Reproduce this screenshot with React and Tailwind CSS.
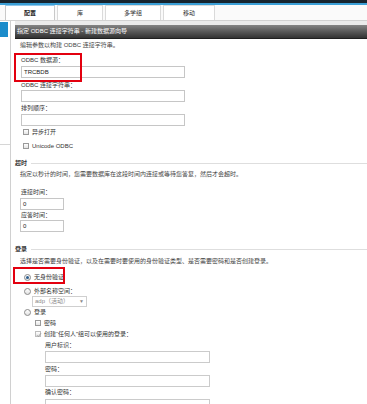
const Line = ({ className = '', children }) => (
    <div className={`h-[10px] leading-[10px] whitespace-nowrap ${className}`}>{children}</div>
);

const Field = ({ className = '', children }) => (
    <div className={`h-[12px] border border-[#c6c6c6] bg-white leading-[10px] pl-[2px] text-[#222] ${className}`}>{children}</div>
);

const Box = ({ checked, disabled }) => (
    <span className={`relative inline-block w-[6px] h-[6px] border ${disabled ? 'border-[#bdbdbd]' : 'border-[#9a9a9a]'} bg-linear-to-b from-white to-[#e4e4e4] mr-[3px] shrink-0`}>
        {checked && (
            <svg viewBox="0 0 6 6" className="absolute inset-0 w-[6px] h-[6px]">
                <path d="M1 3.2 L2.4 4.6 L5 1.2" fill="none" stroke={disabled ? '#9c9c9c' : '#333'} strokeWidth="0.9" />
            </svg>
        )}
    </span>
);

const Radio = ({ checked }) => (
    <span className="inline-flex items-center justify-center w-[7px] h-[7px] rounded-full border border-[#8a8a8a] bg-linear-to-b from-white to-[#e2e2e2] mr-[3px] shrink-0">
        {checked && <span className="w-[3px] h-[3px] rounded-full bg-[#2d5e8e]" />}
    </span>
);

const Heading = ({ className = '', children }) => (
    <div className={`flex items-center h-[10px] leading-[10px] ${className}`}>
        <span className="font-bold text-[#333]">{children}</span>
        <span className="flex-1 h-px bg-[#dedede] ml-[4px]" />
    </div>
);

const tabs = [
    { name: '配置', w: 'w-[50px]', active: true },
    { name: '库', w: 'w-[46px]' },
    { name: '多学组', w: 'w-[56px]' },
    { name: '移动', w: 'w-[52px]' },
];

export default function App() {
    return (
        <div className="relative w-[367px] h-[404px] overflow-hidden bg-white text-[6px] text-[#333] font-['Liberation_Sans','Noto_Sans_CJK_SC',sans-serif]">
            <div className="h-[3px] bg-[#17242e]" />
            <div className="h-[2px] bg-[#3b9fd6]" />
            <div className="flex items-end gap-[2px] h-[16px] pl-[5px] border-b border-[#d2d2d2] bg-[#fafafa]">
                {tabs.map((t) => (
                    <div
                        key={t.name}
                        className={`${t.w} h-[15px] flex items-center justify-center border border-b-0 ${t.active ? 'border-[#c9c9c9] border-t-[#8fc5e8] bg-white font-bold text-[#222]' : 'border-[#dadada] bg-white text-[#333]'}`}
                    >
                        {t.name}
                    </div>
                ))}
            </div>

            <div className="flex">
                <aside className="w-[11px] h-[400px] shrink-0 border-r border-[#d0d0d0]">
                    <div className="h-[124px] pt-[1px] border-b border-[#d6d6d6]">
                        <div className="w-[8px] h-[15px] bg-[#1b8ccb]" />
                    </div>
                </aside>

                <main className="flex-1 pl-[4px]">
                    <div className="h-[4px] bg-[#ebebeb]" />
                    <div className="h-[14px] flex items-center pl-[2px] bg-linear-to-b from-[#858585] via-[#595959] to-[#333] border-b border-[#1f1f1f] text-white">
                        指定 ODBC 连接字符串 - 新建数据源向导
                    </div>
                    <Line className="mt-[1px] pl-[5px] text-[#444]">编辑参数以构建 ODBC 连接字符串。</Line>

                    <Line className="mt-[5px] pl-[6px]">ODBC 数据源：</Line>
                    <Field className="mt-[1px] ml-[6px] w-[164px]">TRCBDB</Field>
                    <Line className="mt-[2px] pl-[6px]">ODBC 连接字符串：</Line>
                    <Field className="ml-[6px] w-[164px]" />
                    <Line className="mt-[1px] pl-[6px]">排列顺序：</Line>
                    <Field className="mt-[1px] ml-[6px] w-[164px]" />
                    <Line className="mt-[1px] pl-[8px] flex items-center"><Box />异步打开</Line>
                    <Line className="mt-[4px] pl-[8px] flex items-center"><Box />Unicode ODBC</Line>

                    <Heading className="mt-[7px]">超时</Heading>
                    <Line className="mt-[1px] pl-[5px] text-[#444]">指定以秒计的时间，您需要数据库在这段时间内连接或等待您答复，然后才会超时。</Line>
                    <Line className="mt-[8px] pl-[6px]">连接时间：</Line>
                    <Field className="mt-[1px] ml-[5px] w-[44px] h-[11px] leading-[9px]">0</Field>
                    <Line className="pl-[6px]">应答时间：</Line>
                    <Field className="ml-[5px] w-[44px] h-[11px] leading-[9px]">0</Field>

                    <Heading className="mt-[12px]">登录</Heading>
                    <Line className="mt-[2px] pl-[5px] text-[#444]">选择是否需要身份验证，以及在需要时要使用的身份验证类型、是否需要密码和是否创建登录。</Line>
                    <Line className="mt-[6px] pl-[9px] flex items-center"><Radio checked />无身份验证</Line>
                    <Line className="mt-[4px] pl-[9px] flex items-center"><Radio />外部名称空间：</Line>
                    <div className="ml-[17px] w-[55px] h-[11px] border border-[#cfcfcf] bg-white flex items-center justify-between px-[2px] text-[#8a8a8a]">
                        <span>adp（活动）</span>
                        <span className="text-[5px]">▼</span>
                    </div>
                    <Line className="pl-[9px] flex items-center"><Radio />登录</Line>
                    <Line className="mt-[1px] pl-[20px] flex items-center"><Box />密码</Line>
                    <Line className="mt-[1px] pl-[20px] flex items-center"><Box checked disabled />创建“任何人”组可以使用的登录：</Line>
                    <Line className="mt-[1px] pl-[30px]">用户标识：</Line>
                    <Field className="mt-[1px] ml-[30px] w-[165px] bg-[#ededed] border-[#cbcbcb]" />
                    <Line className="mt-[1px] pl-[30px]">密码：</Line>
                    <Field className="mt-[1px] ml-[30px] w-[165px] bg-[#ededed] border-[#cbcbcb]" />
                    <Line className="pl-[30px]">确认密码：</Line>
                    <Field className="mt-[2px] ml-[30px] w-[165px] bg-[#ededed] border-[#cbcbcb]" />
                </main>
            </div>

            <div className="absolute left-[14px] top-[53px] w-[68px] h-[29px] border-2 border-[#e3000f]" />
            <div className="absolute left-[13px] top-[267px] w-[52px] h-[17px] border-2 border-[#e3000f]" />
        </div>
    );
}
